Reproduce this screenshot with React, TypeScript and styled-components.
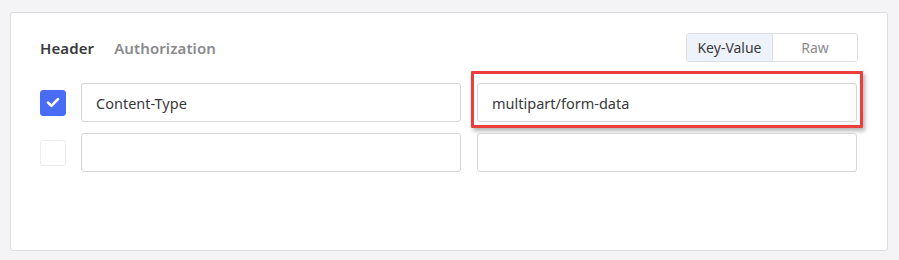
import styled, { createGlobalStyle } from 'styled-components'

type HeaderRow = {
  id: string
  checked: boolean
  name: string
  value: string
  highlight?: boolean
}

const rows: HeaderRow[] = [
  { id: 'r1', checked: true, name: 'Content-Type', value: 'multipart/form-data', highlight: true },
  { id: 'r2', checked: false, name: '', value: '' },
]

const GlobalStyle = createGlobalStyle`
  html, body {
    margin: 0;
    padding: 0;
    background: #f4f4f6;
    font-family: "Noto Sans", "Open Sans", sans-serif;
  }
`

const Page = styled.div`
  padding: 12px 11px 9px 10px;
  box-sizing: border-box;
  width: 899px;
  height: 260px;
`

const Card = styled.section`
  height: 239px;
  box-sizing: border-box;
  background: #fff;
  border: 1px solid #dcdcdf;
  border-radius: 3px;
  padding: 20px 29px 0 29px;
  display: flex;
  flex-direction: column;
  gap: 21px;
`

const Toolbar = styled.div`
  display: flex;
  align-items: center;
  justify-content: space-between;
`

const Tabs = styled.div`
  display: flex;
  gap: 20px;
`

const Tab = styled.span<{ $active?: boolean }>`
  font-size: 15px;
  font-weight: 600;
  color: ${(p) => (p.$active ? '#3a3a3c' : '#8a8a8e')};
  letter-spacing: 0.1px;
`

const Segmented = styled.div`
  display: flex;
  border: 1px solid #dcdfe4;
  border-radius: 3px;
  overflow: hidden;
`

const Segment = styled.button<{ $active?: boolean }>`
  width: 85px;
  height: 27px;
  border: none;
  padding: 0;
  font: inherit;
  font-size: 14px;
  background: ${(p) => (p.$active ? '#eef3fb' : '#fff')};
  color: ${(p) => (p.$active ? '#3a3a3c' : '#8a8a8e')};

  & + & {
    border-left: 1px solid #dcdfe4;
  }
`

const Rows = styled.div`
  display: flex;
  flex-direction: column;
  gap: 11px;
`

const Row = styled.div`
  display: grid;
  grid-template-columns: 26px 380px 381px;
  column-gap: 15px;
  align-items: center;

  & > :last-child {
    margin-left: 1px;
  }
`

const Check = styled.span<{ $checked?: boolean }>`
  width: 26px;
  height: 26px;
  box-sizing: border-box;
  border-radius: 3px;
  display: flex;
  align-items: center;
  justify-content: center;
  background: ${(p) => (p.$checked ? '#4a6cf4' : '#fff')};
  border: 1px solid ${(p) => (p.$checked ? '#4a6cf4' : '#ececef')};
`

const Field = styled.div`
  position: relative;
`

const Input = styled.input`
  display: block;
  width: 100%;
  height: 39px;
  box-sizing: border-box;
  border: 1px solid #d6d6da;
  border-radius: 3px;
  padding: 0 14px;
  font: inherit;
  font-size: 14.5px;
  color: #3a3a3c;
  background: #fff;
  outline: none;
`

const Highlight = styled.span`
  position: absolute;
  top: -12px;
  left: -6px;
  right: -6px;
  bottom: -6px;
  border: 3px solid #ec3f3b;
  border-radius: 1px;
  box-shadow: 2px 3px 4px rgba(0, 0, 0, 0.3);
  pointer-events: none;
`

export default function App() {
  return (
    <Page>
      <GlobalStyle />
      <Card>
        <Toolbar>
          <Tabs>
            <Tab $active>Header</Tab>
            <Tab>Authorization</Tab>
          </Tabs>
          <Segmented>
            <Segment $active>Key-Value</Segment>
            <Segment>Raw</Segment>
          </Segmented>
        </Toolbar>

        <Rows>
          {rows.map((row) => (
            <Row key={row.id}>
              <Check $checked={row.checked}>
                {row.checked ? (
                  <svg width="14" height="11" viewBox="0 0 14 11">
                    <path
                      d="M2 5.6 L5.4 8.8 L12 2.2"
                      fill="none"
                      stroke="#fff"
                      strokeWidth="2.6"
                      strokeLinecap="round"
                      strokeLinejoin="round"
                    />
                  </svg>
                ) : null}
              </Check>
              <Field>
                <Input defaultValue={row.name} />
              </Field>
              <Field>
                <Input defaultValue={row.value} />
                {row.highlight ? <Highlight /> : null}
              </Field>
            </Row>
          ))}
        </Rows>
      </Card>
    </Page>
  )
}
